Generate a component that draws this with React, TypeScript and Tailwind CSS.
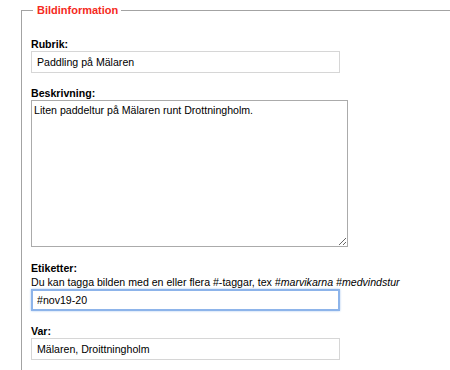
import { useState } from 'react';

const font = { fontFamily: '"Liberation Sans", Arial, sans-serif' };

export default function App() {
	const [rubrik, setRubrik] = useState('Paddling på Mälaren');
	const [text, setText] = useState('Liten paddeltur på Mälaren runt Drottningholm.');
	const [tags, setTags] = useState('#nov19-20');
	const [place, setPlace] = useState('Mälaren, Droittningholm');

	return (
		<div className="h-[370px] w-[450px] overflow-hidden bg-white text-[10.6px] text-black" style={font}>
			<fieldset className="ml-[21px] mt-[4px] w-[460px] border border-[#a3a3a3] pb-10 pl-[9px]">
				<legend className="ml-[2px] pl-[4px] pr-[3px] text-[11px] font-bold leading-[13px] text-[#f52a22]">
					Bildinformation
				</legend>

				<div className="mt-[21px]">
					<label htmlFor="rubrik" className="block font-bold leading-[13px]">
						Rubrik:
					</label>
					<input
						id="rubrik"
						value={rubrik}
						onChange={(e) => setRubrik(e.target.value)}
						className="block h-[22px] w-[309px] border border-[#d6d6d6] px-[5px] text-[10.6px] outline-none"
					/>
				</div>

				<div className="mt-[14px]">
					<label htmlFor="beskrivning" className="block font-bold leading-[13px]">
						Beskrivning:
					</label>
					<textarea
						id="beskrivning"
						value={text}
						onChange={(e) => setText(e.target.value)}
						className="block h-[147px] w-[317px] resize border border-[#ababab] px-[2px] py-[2px] text-[10.6px] leading-[14px] outline-none"
					/>
				</div>

				<div className="mt-[15px]">
					<label htmlFor="etiketter" className="block font-bold leading-[13px]">
						Etiketter:
					</label>
					<p className="leading-[14px]">
						Du kan tagga bilden med en eller flera #-taggar, tex <i>#marvikarna #medvindstur</i>
					</p>
					<input
						id="etiketter"
						value={tags}
						onChange={(e) => setTags(e.target.value)}
						className="block h-[22px] w-[309px] border-2 border-[#8db4ea] px-[4px] text-[10.6px] shadow-[0_0_2px_#a9c8f0] outline-none"
					/>
				</div>

				<div className="mt-[14px]">
					<label htmlFor="var" className="block font-bold leading-[13px]">
						Var:
					</label>
					<input
						id="var"
						value={place}
						onChange={(e) => setPlace(e.target.value)}
						className="block h-[22px] w-[309px] border border-[#d6d6d6] px-[5px] text-[10.6px] outline-none"
					/>
				</div>
			</fieldset>
		</div>
	);
}
